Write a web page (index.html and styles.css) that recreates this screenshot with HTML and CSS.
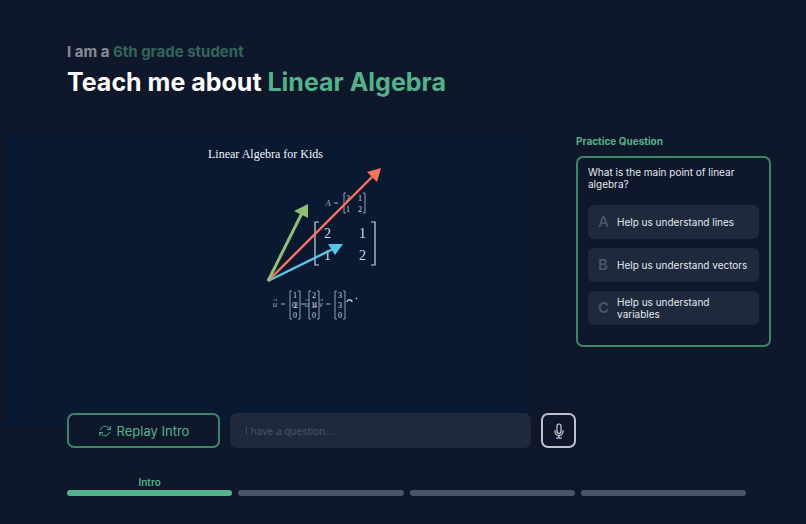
FILE: index.html
```html
<!DOCTYPE html>
<html lang="en">
<head>
<meta charset="utf-8">
<meta name="viewport" content="width=device-width, initial-scale=1">
<title>Teach me about Linear Algebra</title>
<link rel="stylesheet" href="styles.css">
</head>
<body>
<header class="header">
  <p class="audience">I am a <span class="accent">6th grade student</span></p>
  <h1 class="title">Teach me about <span class="accent">Linear Algebra</span></h1>
</header>

<main class="lesson">
  <svg class="video" viewBox="0 0 524 292" role="img" aria-label="Linear Algebra for Kids">
    <text class="caption" x="204" y="23">Linear Algebra for Kids</text>

    <g class="bracket">
      <path d="M315 87H311V130H315M367 87H371V130H367"/>
    </g>
    <g class="digits digits-large">
      <text x="320" y="103">2</text><text x="355" y="103">1</text>
      <text x="320" y="125">1</text><text x="355" y="125">2</text>
    </g>

    <g class="bracket bracket-thin">
      <path d="M342 58H340V78H342M359 58H361V78H359"/>
      <path d="M288 156H286V184H288M294 156H296V184H294"/>
      <path d="M307 156H305V184H307M313 156H315V184H313"/>
      <path d="M333 156H331V184H333M339 156H341V184H339"/>
    </g>
    <g class="digits digits-small">
      <text x="342" y="66">2</text><text x="354" y="66">1</text>
      <text x="342" y="77">1</text><text x="354" y="77">2</text>
      <text x="289" y="163">1</text><text x="288" y="173">0</text><text x="290" y="173">2</text><text x="289" y="183">0</text>
      <text x="308" y="163">2</text><text x="307" y="173">1</text><text x="309" y="173">4</text><text x="308" y="183">0</text>
      <text x="334" y="163">3</text><text x="334" y="173">3</text><text x="334" y="183">0</text>
    </g>
    <g class="symbols">
      <text class="symbol" x="324" y="71" text-anchor="middle">A</text>
      <text x="332" y="71" text-anchor="middle">=</text>
      <text class="symbol" x="271" y="172" text-anchor="middle">u</text>
      <text x="279" y="172" text-anchor="middle">=</text>
      <text x="299" y="172" text-anchor="middle">=</text>
      <text class="symbol" x="303" y="172" text-anchor="middle">u</text>
      <text class="symbol" x="317" y="172" text-anchor="middle">v</text>
      <text x="324" y="172" text-anchor="middle">=</text>
    </g>
    <path class="vector-mark" d="M269 165h4m-1-1l1 1-1 1M301 165h4m-1-1l1 1-1 1M315 165h4m-1-1l1 1-1 1"/>
    <path class="ink" d="M343 167q1-3 3-2q2 0 2 2M352 163l1 1"/>

    <g class="vector blue"><path d="M264 146L329 114"/><path class="tip" d="M339 109L324 109L331 120Z"/></g>
    <g class="vector red"><path d="M264 146L370 40"/><path class="tip" d="M377 33L363 37L373 47Z"/></g>
    <g class="vector green"><path d="M264 146L298 78"/><path class="tip" d="M304 69L290 76L304 83Z"/></g>
  </svg>

  <aside class="practice">
    <h2 class="practice-title">Practice Question</h2>
    <section class="card">
      <p class="question">What is the main point of linear algebra?</p>
      <div class="options">
        <button class="option" type="button"><span class="letter">A</span><span>Help us understand lines</span></button>
        <button class="option" type="button"><span class="letter">B</span><span>Help us understand vectors</span></button>
        <button class="option" type="button"><span class="letter">C</span><span>Help us understand variables</span></button>
      </div>
    </section>
  </aside>
</main>

<form class="controls">
  <button class="replay" type="button">
    <svg class="icon" viewBox="0 0 24 24" aria-hidden="true"><path d="M16.023 9.348h4.992v-.001M2.985 19.644v-4.992m0 0h4.992m-4.993 0 3.181 3.183a8.25 8.25 0 0 0 13.803-3.7M4.031 9.865a8.25 8.25 0 0 1 13.803-3.7l3.181 3.182m0-4.991v4.99"/></svg>
    Replay Intro
  </button>
  <input class="ask" type="text" aria-label="Ask a question" placeholder="I have a question...">
  <button class="mic" type="button" aria-label="Speak">
    <svg class="icon" viewBox="0 0 24 24" aria-hidden="true"><path d="M12 18.75a6 6 0 0 0 6-6v-1.5m-6 7.5a6 6 0 0 1-6-6v-1.5m6 7.5v3.75m-3.75 0h7.5M12 15.75a3 3 0 0 1-3-3V4.5a3 3 0 1 1 6 0v8.25a3 3 0 0 1-3 3Z"/></svg>
  </button>
</form>

<ol class="steps">
  <li class="step current">Intro</li>
  <li class="step"></li>
  <li class="step"></li>
  <li class="step"></li>
</ol>
</body>
</html>
```

FILE: styles.css
```css
* {
  box-sizing: border-box;
}

body {
  margin: 0;
  background: #0f172a;
  color: #e2e8f0;
  font-family: Inter, sans-serif;
}

h1, h2, p, ol {
  margin: 0;
  padding: 0;
}

button, input {
  margin: 0;
  font: inherit;
  color: inherit;
}

.accent {
  color: #52b38b;
}

.header {
  padding: 42px 67px 37px;
}

.audience {
  margin-bottom: 4px;
  color: #fff;
  font-size: 15px;
  font-weight: 700;
  line-height: 20px;
  opacity: 0.5;
}

.title {
  color: #fff;
  font-size: 25px;
  font-weight: 700;
  line-height: 32px;
}

.lesson {
  display: grid;
  grid-template-columns: minmax(0, 1fr) 195px;
  align-items: start;
  gap: 48px;
  padding: 0 35px 0 4px;
}

.video {
  display: block;
  width: 100%;
  background: #0a1932;
  font-family: "Liberation Serif", serif;
}

.caption {
  fill: #f1f5f9;
  font-size: 12px;
}

.bracket {
  fill: none;
  stroke: #cbd5e1;
  stroke-width: 1.2;
}

.bracket-thin {
  stroke: #a3aebf;
  stroke-width: 0.9;
}

.digits {
  fill: #d5dbe5;
}

.digits-large {
  font-size: 14px;
}

.digits-small {
  font-size: 8px;
}

.symbols {
  fill: #94a3b8;
  font-size: 9px;
}

.symbol {
  font-style: italic;
}

.vector-mark {
  fill: none;
  stroke: #94a3b8;
  stroke-width: 0.5;
}

.ink {
  fill: none;
  stroke: #cbd5e1;
  stroke-width: 1.3;
}

.vector {
  stroke: currentColor;
  stroke-width: 2.4;
}

.tip {
  fill: currentColor;
  stroke: none;
}

.blue {
  color: #58c4e6;
}

.red {
  color: #fc7358;
}

.green {
  color: #8fc072;
  stroke-width: 3;
}

.practice-title {
  margin-bottom: 9px;
  color: #52b38b;
  font-size: 10px;
  font-weight: 700;
  line-height: 12px;
}

.card {
  padding: 8px 10px 20px;
  border: 2px solid #3b8569;
  border-radius: 7px;
}

.question {
  margin-bottom: 15px;
  font-size: 10px;
  line-height: 12px;
}

.options {
  display: grid;
  gap: 9px;
}

.option {
  display: flex;
  align-items: center;
  gap: 8px;
  min-height: 34px;
  padding: 5px 10px;
  border: 0;
  border-radius: 6px;
  background: #1e293b;
  font-size: 10px;
  line-height: 12px;
  text-align: left;
}

.letter {
  flex: 0 0 11px;
  color: #475569;
  font-size: 15px;
  font-weight: 600;
}

.controls {
  position: relative;
  display: flex;
  gap: 10px;
  margin: -14px 230px 0 67px;
}

.replay, .mic {
  display: flex;
  align-items: center;
  justify-content: center;
  height: 35px;
  border: 2px solid #3b8569;
  border-radius: 7px;
  background: #0f172a;
}

.replay {
  flex: 0 0 153px;
  gap: 5px;
  padding: 0;
  color: #52b38b;
  font-size: 13px;
}

.icon {
  width: 14px;
  height: 14px;
  fill: none;
  stroke: currentColor;
  stroke-width: 1.6;
  stroke-linecap: round;
  stroke-linejoin: round;
}

.ask {
  flex: 1;
  min-width: 0;
  height: 35px;
  padding: 0 15px;
  border: 0;
  border-radius: 7px;
  background: #1e293b;
  font-size: 10px;
}

.ask::placeholder {
  color: #475569;
  opacity: 1;
}

.mic {
  flex: 0 0 35px;
  padding: 0;
  border-color: #bcc3cf;
}

.mic .icon {
  width: 16px;
  height: 16px;
}

.steps {
  display: grid;
  grid-template-columns: repeat(4, minmax(0, 1fr));
  align-items: end;
  gap: 6px;
  margin: 27px 60px 0 67px;
  list-style: none;
}

.step {
  color: #52b38b;
  font-size: 10px;
  font-weight: 600;
  line-height: 14px;
  text-align: center;
}

.step::after {
  content: "";
  display: block;
  height: 6px;
  margin-top: 1px;
  border-radius: 3px;
  background: #475569;
}

.current::after {
  background: #52b38b;
}
```
